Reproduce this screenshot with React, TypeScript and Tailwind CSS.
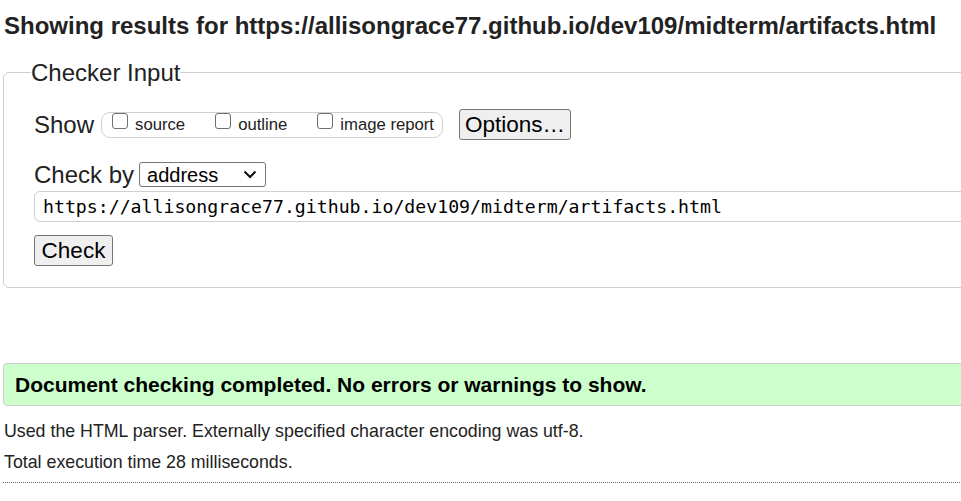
const url = 'https://allisongrace77.github.io/dev109/midterm/artifacts.html'

const showOptions = ['source', 'outline', 'image report']

function Box({ label, last }: { label: string; last?: boolean }) {
  return (
    <label className={`flex items-center ${last ? '' : 'mr-[30px]'}`}>
      <span className="mb-[8px] mr-[7px] h-4 w-4 rounded-[3px] border border-[#6f6f6f] bg-white" />
      <span className="text-[16.7px] leading-[18px]">{label}</span>
    </label>
  )
}

export default function App() {
  return (
    <div className="h-[501px] w-[961px] overflow-hidden bg-white text-[#222]" style={{ fontFamily: '"Liberation Sans", Arial, sans-serif' }}>
      <div className="w-[1100px]">
        <h1 className="mt-3 ml-[4px] text-[24px] font-bold leading-[28px]">Showing results for {url}</h1>

        <fieldset className="mt-[19px] ml-[3px] rounded-[6px] border border-[#cfcfcf] px-[27px] pb-[21px]">
          <legend className="text-[24px] leading-[27px]">Checker Input</legend>
          <div className="pl-[3px]">
            <div className="mt-[23px] flex h-[31px] items-center">
              <span className="text-[24px] leading-[27px]">Show</span>
              <div className="ml-[7px] flex h-[26px] items-center rounded-[9px] border border-[#cfcfcf] pl-[10px] pr-[8px]">
                {showOptions.map((o, i) => (
                  <Box key={o} label={o} last={i === showOptions.length - 1} />
                ))}
              </div>
              <button className="ml-[16px] h-[31px] w-[112px] rounded-[3px] border border-[#767676] bg-[#efefef] text-[22.5px] leading-[25px] text-black">
                Options…
              </button>
            </div>

            <div className="mt-[21px] flex h-[27px] items-center">
              <span className="text-[24px] leading-[27px]">Check by</span>
              <div className="ml-[5px] flex h-[25px] w-[127px] items-center justify-between rounded-[3px] border border-[#767676] pl-[7px] pr-[7px] text-black">
                <span className="text-[20px] leading-[22px]">address</span>
                <svg width="14" height="9" viewBox="0 0 14 9" className="mr-[1px]">
                  <path d="M1.5 1.5 L7 7 L12.5 1.5" fill="none" stroke="#111" strokeWidth="2" />
                </svg>
              </div>
            </div>

            <div className="mt-[3px] flex h-[31px] items-center rounded-[6px] border border-[#cfcfcf] pl-[8px] text-black">
              <span className="text-[18.2px] leading-[22px]" style={{ fontFamily: '"DejaVu Sans Mono", "Liberation Mono", monospace' }}>
                {url}
              </span>
            </div>

            <button className="mt-[13px] block h-[31px] w-[79px] rounded-[3px] border border-[#767676] bg-[#efefef] text-[22.5px] leading-[25px] text-black">
              Check
            </button>
          </div>
        </fieldset>

        <div className="mt-[75px] ml-[3px] flex h-[43px] items-center rounded-[4px] border border-[#cccccc] bg-[#ccffcc] pl-[11px] text-[21px] font-bold leading-[24px] text-black">
          Document checking completed. No errors or warnings to show.
        </div>

        <p className="mt-[14px] ml-[4px] text-[17.8px] leading-[22px]">Used the HTML parser. Externally specified character encoding was utf-8.</p>
        <p className="mt-[9px] ml-[4px] text-[17.8px] leading-[22px]">Total execution time 28 milliseconds.</p>

        <div className="mt-[9px] ml-[3px] border-t border-dotted border-[#666]" />
      </div>
    </div>
  )
}
